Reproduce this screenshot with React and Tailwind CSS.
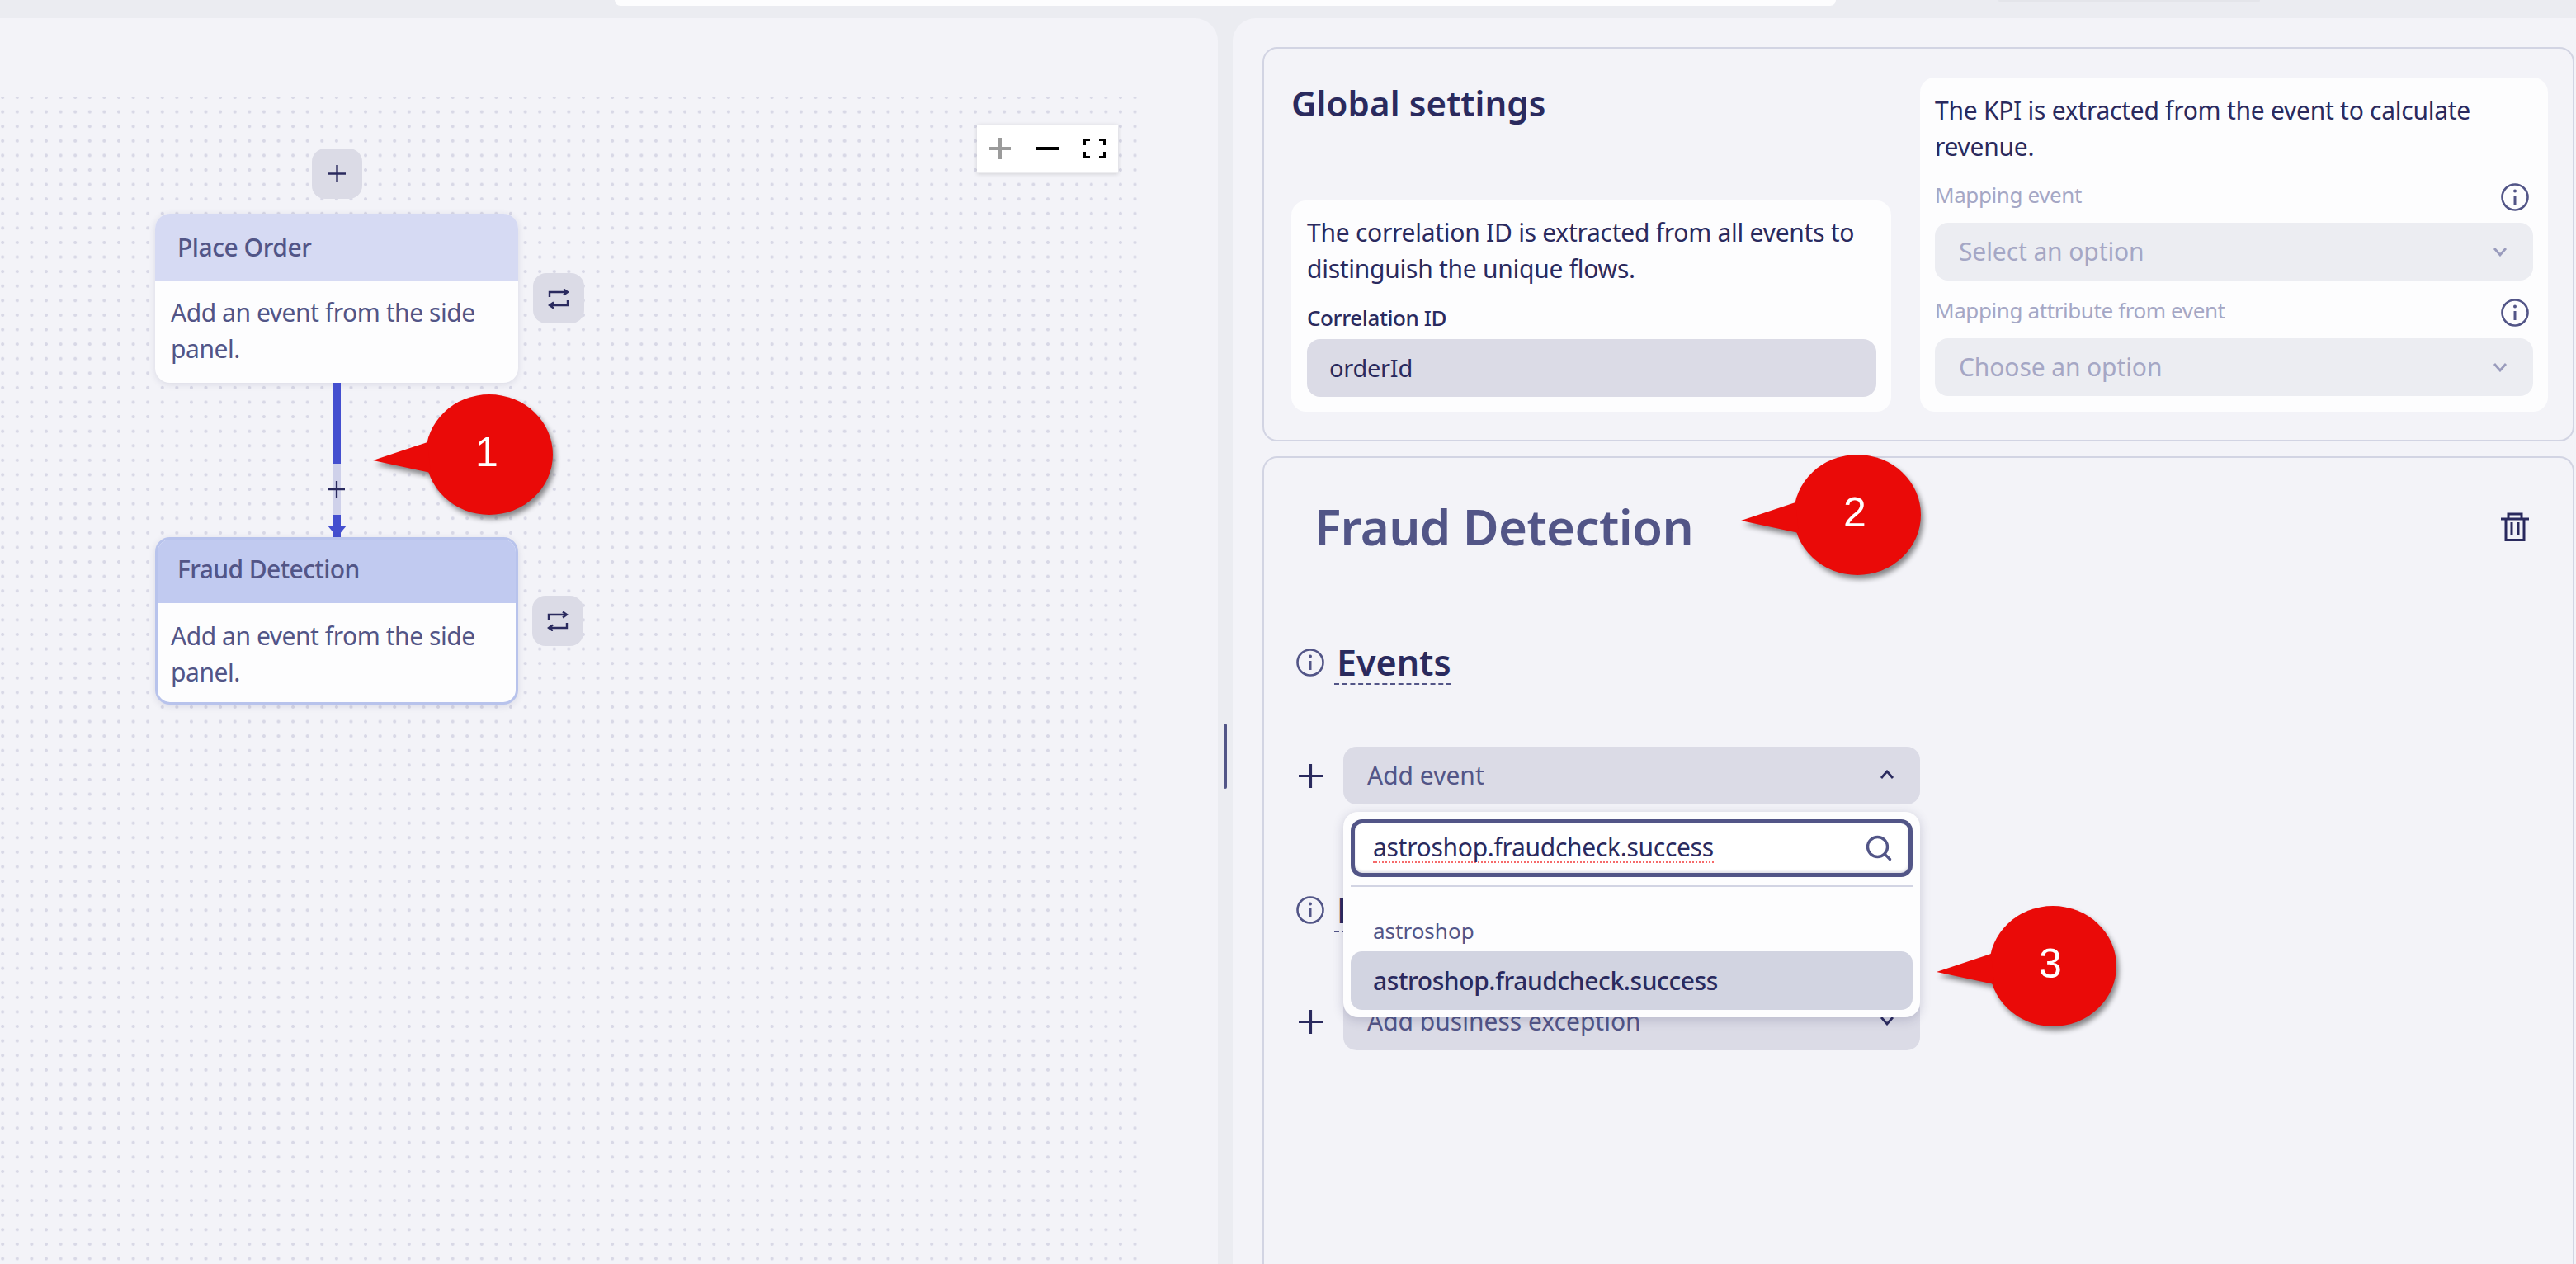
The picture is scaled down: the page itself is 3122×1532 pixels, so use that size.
import { Search } from "lucide-react";

function PlusIcon({ className, size = 22, width = 2.5 }) {
  return (
    <svg className={className} width={size} height={size} viewBox="0 0 22 22" fill="none" stroke="#2a2a5e" strokeWidth={width}>
      <path d="M11 0V22M0 11H22" />
    </svg>
  );
}

function SwapIcon() {
  return (
    <svg width="26" height="24" viewBox="0 0 26 24" fill="none" stroke="#2a2a5e" strokeWidth="2.4">
      <path d="M2 10V4H24M19 0.5L24 4L19 7.5" />
      <path d="M24 14V20H2M7 16.5L2 20L7 23.5" />
    </svg>
  );
}

function InfoIcon({ className }) {
  return (
    <svg className={className} width="34" height="34" viewBox="0 0 34 34" fill="none" stroke="#525587" strokeWidth="2.6">
      <circle cx="17" cy="17" r="15.5" />
      <path d="M17 15V26" strokeWidth="3" />
      <circle cx="17" cy="9.5" r="2" fill="#525587" stroke="none" />
    </svg>
  );
}

function Chevron({ up, color = "#2a2a5e" }) {
  return (
    <svg width="18" height="12" viewBox="0 0 18 12" fill="none" stroke={color} strokeWidth="2.8">
      <path d={up ? "M2 10L9 2L16 10" : "M2 2L9 10L16 2"} />
    </svg>
  );
}

function TrashIcon() {
  return (
    <svg width="34" height="35" viewBox="0 0 34 35" fill="none" stroke="#2a2a5e" strokeWidth="3">
      <path d="M0 8H34M9 8V2H25V8M6 8V33.5H28V8M13 12V28M21 12V28" />
    </svg>
  );
}

function Callout({ className, label }) {
  return (
    <div className={`absolute z-20 h-[146px] w-[218px] ${className}`}>
      <svg className="drop-shadow-[3px_5px_3px_rgba(0,0,0,0.45)]" width="218" height="146" viewBox="0 0 218 146" fill="#ea0a08" overflow="visible">
        <ellipse cx="141" cy="73" rx="77" ry="73" />
        <path d="M0 80L66 58L70 95Z" />
      </svg>
      <span className="absolute left-[108px] top-[40px] w-[60px] text-center font-['Liberation_Sans',sans-serif] text-[50px] leading-[60px] text-white">{label}</span>
    </div>
  );
}

function SwapButton({ className }) {
  return (
    <div className={`absolute flex h-[61px] w-[62px] items-center justify-center rounded-[16px] bg-[#dbdbe6] ${className}`}>
      <SwapIcon />
    </div>
  );
}

function SelectBox({ label, up }) {
  return (
    <div className="flex h-[70px] w-[699px] items-center justify-between rounded-[16px] bg-[#dbdbe6] pb-[2px] pl-[29px] pr-[31px] text-[30px] text-[#525587]">
      <span>{label}</span>
      <Chevron up={up} />
    </div>
  );
}

function MappingField({ label, placeholder, className }) {
  return (
    <>
      <div className={`flex h-[34px] items-center justify-between pr-[5px] text-[26px] tracking-[-0.4px] text-[#a5a7c5] ${className}`}>
        <span>{label}</span>
        <InfoIcon className="translate-y-[3px]" />
      </div>
      <div className="mt-[17px] flex h-[70px] items-center justify-between rounded-[16px] bg-[#ecedf2] pl-[29px] pr-[31px] text-[30px] tracking-[-0.1px] text-[#a5a7c5]">
        <span>{placeholder}</span>
        <Chevron color="#9a9cbd" />
      </div>
    </>
  );
}

function FlowCanvas() {
  return (
    <div className="relative ml-0 mt-[96px] h-[1414px] w-[1378px] bg-[radial-gradient(circle,#d8d8e6_1.7px,transparent_2.3px)] bg-[length:17.6px_17.6px] bg-[position:-5.6px_-8.8px]">
      <div className="absolute left-[378px] top-[62px] flex h-[61px] w-[61px] items-center justify-center rounded-[16px] bg-[#dbdbe6]">
        <PlusIcon size={21} />
      </div>

      <div className="absolute left-[188px] top-[141px] w-[440px] overflow-hidden rounded-[18px] bg-[#fdfdfe] text-[30px] leading-[44px] tracking-[-0.45px] text-[#525587] shadow-[0_2px_8px_rgba(40,40,90,0.12)]">
        <div className="flex h-[82px] items-center bg-[#d6daf3] pl-[27px] font-medium">Place Order</div>
        <div className="h-[123px] px-[19px] pt-[16px]">Add an event from the side panel.</div>
      </div>
      <SwapButton className="left-[646px] top-[213px]" />

      <div className="absolute left-[403px] top-[346px] flex w-[10px] flex-col">
        <div className="h-[98px] bg-[#444fcf]" />
        <div className="relative h-[62px] bg-[#cfd1ea]">
          <PlusIcon className="absolute -left-[5px] top-[21px]" size={20} />
        </div>
        <div className="relative h-[27px] bg-[#444fcf]">
          <svg className="absolute -left-[6px] top-[13px]" width="23" height="14" viewBox="0 0 23 14" fill="#444fcf">
            <path d="M0 0H23L11.5 14Z" />
          </svg>
        </div>
      </div>

      <div className="absolute left-[188px] top-[533px] h-[203px] w-[440px] overflow-hidden rounded-[18px] border-[3px] border-[#b8c3ec] bg-[#fdfdfe] text-[30px] leading-[44px] tracking-[-0.45px] text-[#525587] shadow-[0_2px_8px_rgba(40,40,90,0.12)]">
        <div className="flex h-[77px] items-center bg-[#c1caf0] pb-[5px] pl-[24px] font-medium tracking-[-0.6px]">Fraud Detection</div>
        <div className="px-[16px] pt-[18px]">Add an event from the side panel.</div>
      </div>
      <SwapButton className="left-[645px] top-[604px]" />

      <div className="absolute left-[1184px] top-[33px] flex h-[59px] w-[171px] items-center justify-between border-b-2 border-[#ededf0] bg-white pl-[15px] pr-[15px] shadow-[0_1px_5px_rgba(0,0,0,0.14)]">
        <svg width="26" height="26" viewBox="0 0 26 26" fill="none" stroke="#9b9b9b" strokeWidth="4">
          <path d="M13 0V26M0 13H26" />
        </svg>
        <svg width="27" height="4" viewBox="0 0 27 4" fill="none" stroke="#000" strokeWidth="4">
          <path d="M0 2H27" />
        </svg>
        <svg width="27" height="24" viewBox="0 0 27 24" fill="none" stroke="#000" strokeWidth="3">
          <path d="M1.5 8V1.5H8M19 1.5H25.5V8M25.5 16V22.5H19M8 22.5H1.5V16" />
        </svg>
      </div>
    </div>
  );
}

function GlobalSettings() {
  return (
    <section className="flex h-[478px] gap-[35px] rounded-[18px] border-2 border-[#d2d4e3] pb-[34px] pl-[33px] pr-[30px] pt-[35px] text-[#2a2a5e]">
      <div className="flex w-[727px] flex-col">
        <h2 className="text-[42px] font-semibold leading-[62px] tracking-[0.1px]">Global settings</h2>
        <div className="mt-auto h-[256px] rounded-[18px] bg-[#fdfdfe] px-[19px] pt-[17px] text-[30px] leading-[44px] tracking-[-0.26px]">
          <p>The correlation ID is extracted from all events to distinguish the unique flows.</p>
          <div className="mt-[20px] text-[26px] font-medium leading-[34px] tracking-[-0.4px]">Correlation ID</div>
          <div className="mt-[9px] flex h-[70px] w-[690px] items-center rounded-[16px] bg-[#dbdbe6] pl-[27px] text-[29px]">orderId</div>
        </div>
      </div>
      <div className="w-[761px] rounded-[18px] bg-[#fdfdfe] px-[18px] pt-[18px] text-[30px] leading-[44px] tracking-[-0.26px]">
        <p>The KPI is extracted from the event to calculate revenue.</p>
        <MappingField className="mt-[19px]" label="Mapping event" placeholder="Select an option" />
        <MappingField className="mt-[19px]" label="Mapping attribute from event" placeholder="Choose an option" />
      </div>
    </section>
  );
}

function EventDropdown() {
  return (
    <div className="absolute left-0 top-[79px] z-10 h-[249px] w-[699px] rounded-[18px] bg-[#fdfdfe] p-[9px] shadow-[0_3px_14px_rgba(40,40,90,0.2)]">
      <div className="flex h-[70px] items-center justify-between rounded-[14px] border-[5px] border-[#525587] bg-white pl-[22px] pr-[18px] text-[30px] tracking-[-0.3px] text-[#2a2a5e] shadow-[inset_0_-2px_3px_rgba(40,40,90,0.15)]">
        <span className="border-b-2 border-dotted border-[#f56a6a] leading-[34px]">astroshop.fraudcheck.success</span>
        <Search size={36} color="#525587" strokeWidth={2.2} />
      </div>
      <div className="mt-[10px] h-[2px] bg-[#d2d4e3]" />
      <div className="mt-[36px] pl-[27px] text-[26px] leading-[34px] text-[#525587]">astroshop</div>
      <div className="mt-[8px] flex h-[71px] items-center rounded-[14px] bg-[#d2d4e1] pl-[27px] text-[30px] font-medium tracking-[-0.4px] text-[#2a2a5e]">astroshop.fraudcheck.success</div>
    </div>
  );
}

function SectionHeading({ label, className }) {
  return (
    <div className={`flex items-center gap-[12px] pl-[39px] ${className}`}>
      <InfoIcon />
      <span className="border-b-2 border-dashed border-[#525587] pl-[3px] pt-[2px] text-[43px] font-semibold leading-[50px] text-[#2a2a5e]">{label}</span>
    </div>
  );
}

function FraudPanel() {
  return (
    <section className="mt-[18px] h-[979px] rounded-t-[18px] border-2 border-b-0 border-[#d2d4e3]">
      <div className="mt-[43px] flex h-[80px] items-center justify-between pl-[61px] pr-[53px]">
        <h1 className="text-[60px] font-semibold leading-[80px] tracking-[-0.66px] text-[#525587]">Fraud Detection</h1>
        <TrashIcon />
      </div>
      <SectionHeading className="mt-[98px]" label="Events" />
      <div className="mt-[75px] flex items-center pl-[42px]">
        <PlusIcon size={29} width={2.4} />
        <div className="relative ml-[25px]">
          <SelectBox label="Add event" up />
          <EventDropdown />
        </div>
      </div>
      <SectionHeading className="mt-[101px]" label="Business exceptions" />
      <div className="mt-[73px] flex items-center pl-[42px]">
        <PlusIcon size={29} width={2.4} />
        <div className="ml-[25px]">
          <SelectBox label="Add business exception" />
        </div>
      </div>
    </section>
  );
}

export default function App() {
  return (
    <div className="relative h-[1532px] w-[3122px] overflow-hidden bg-[#ebecf1] font-['Noto_Sans',sans-serif]">
      <div className="flex h-[22px] items-start">
        <div className="ml-[745px] h-[7px] w-[1480px] rounded-b-[24px] bg-[#fdfdfe]" />
        <div className="ml-[197px] h-[3px] w-[317px] rounded-b-[8px] bg-[#e4e5ea]" />
      </div>
      <div className="flex h-[1510px] gap-[18px]">
        <div className="w-[1476px] rounded-tr-[28px] bg-[#f3f3f8]">
          <FlowCanvas />
        </div>
        <div className="flex-1 rounded-tl-[28px] bg-[#f3f3f8] pl-[36px] pr-[2px] pt-[35px]">
          <GlobalSettings />
          <FraudPanel />
        </div>
      </div>
      <div className="absolute left-[1483px] top-[877px] h-[79px] w-[4px] rounded-full bg-[#525587]" />
      <Callout className="left-[452px] top-[478px]" label="1" />
      <Callout className="left-[2110px] top-[551px]" label="2" />
      <Callout className="left-[2347px] top-[1098px]" label="3" />
    </div>
  );
}
